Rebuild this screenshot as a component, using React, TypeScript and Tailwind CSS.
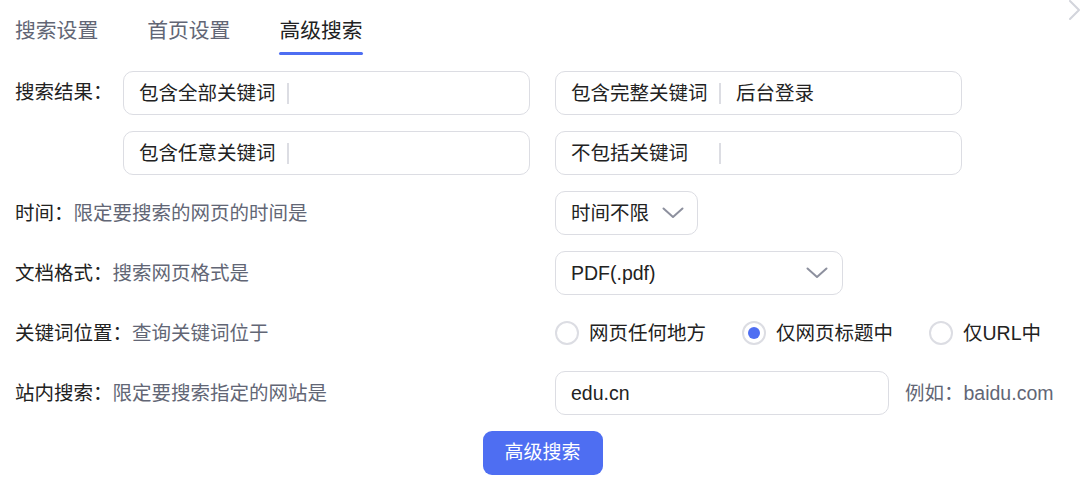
import { useState } from 'react';

const font = { fontFamily: '"Liberation Sans", "Noto Sans CJK SC", sans-serif' };

function KeywordInput({ label, value }: { label: string; value?: string }) {
  return (
    <div className="flex items-center h-[44px] w-[407px] border border-[#dcdde3] rounded-[10px] pl-[15px] bg-white">
      <span className="w-[137px] shrink-0 text-[#222222] leading-[22px]">{label}</span>
      <span className="ml-[11px] w-[2px] h-[21px] bg-[#dcdde3] shrink-0" />
      {value && <span className="ml-[15px] text-[#222222] leading-[22px]">{value}</span>}
    </div>
  );
}

function Chevron() {
  return (
    <svg width="22" height="12" viewBox="0 0 22 12" fill="none">
      <path d="M1.5 1.5 L11 10 L20.5 1.5" stroke="#8d909e" strokeWidth="2" strokeLinecap="round" strokeLinejoin="round" />
    </svg>
  );
}

function Row({ label, desc, children }: { label: string; desc: string; children: React.ReactNode }) {
  return (
    <div className="flex items-center h-[44px]">
      <div className="w-[540px] shrink-0 leading-[22px]">
        <span className="text-[#222222]">{label}：</span>
        <span className="text-[#626675]">{desc}</span>
      </div>
      {children}
    </div>
  );
}

export default function App() {
  const [pos, setPos] = useState(1);
  const radios = ['网页任何地方', '仅网页标题中', '仅URL中'];

  return (
    <div className="relative w-[1080px] h-[486px] bg-white overflow-hidden text-[19.5px]" style={font}>
      <svg className="absolute top-[-1px] right-[-2px]" width="14" height="24" viewBox="0 0 14 24" fill="none">
        <path d="M2 2 L11 11 L2 20" stroke="#d3d5dc" strokeWidth="2" strokeLinecap="round" strokeLinejoin="round" />
      </svg>

      <div className="pl-[15px]">
        {/* 标签页 */}
        <div className="flex gap-[49px] text-[20.8px]">
          {['搜索设置', '首页设置', '高级搜索'].map((t, i) => (
            <div key={t} className="flex flex-col pt-[20px]">
              <span className={'leading-[21px] ' + (i === 2 ? 'text-[#222222]' : 'text-[#626675]')}>{t}</span>
              <span className={'mt-[11px] h-[3px] rounded-full ' + (i === 2 ? 'bg-[#4e6ef2]' : 'bg-transparent')} />
            </div>
          ))}
        </div>

        <div className="mt-[16px] flex flex-col gap-[16px]">
          <div className="flex">
            <div className="w-[108px] h-[44px] flex items-center text-[#222222] shrink-0">搜索结果：</div>
            <div className="grid grid-cols-[407px_407px] gap-x-[25px] gap-y-[16px]">
              <KeywordInput label="包含全部关键词" />
              <KeywordInput label="包含完整关键词" value="后台登录" />
              <KeywordInput label="包含任意关键词" />
              <KeywordInput label="不包括关键词" />
            </div>
          </div>

          <Row label="时间" desc="限定要搜索的网页的时间是">
            <div className="flex items-center h-[44px] border border-[#dcdde3] rounded-[10px] pl-[15px] pr-[13px]">
              <span className="text-[#222222] leading-[22px]">时间不限</span>
              <span className="ml-[13px] flex"><Chevron /></span>
            </div>
          </Row>

          <Row label="文档格式" desc="搜索网页格式是">
            <div className="flex items-center justify-between w-[288px] h-[44px] border border-[#dcdde3] rounded-[10px] pl-[15px] pr-[14px]">
              <span className="text-[#222222] leading-[22px]">PDF(.pdf)</span>
              <Chevron />
            </div>
          </Row>

          <Row label="关键词位置" desc="查询关键词位于">
            <div className="flex items-center gap-[36px]">
              {radios.map((r, i) => (
                <label key={r} className="flex items-center gap-[10px] cursor-pointer" onClick={() => setPos(i)}>
                  <span className="w-[24px] h-[24px] rounded-full border-2 border-[#dcdde3] flex items-center justify-center">
                    {pos === i && <span className="w-[12px] h-[12px] rounded-full bg-[#4e6ef2]" />}
                  </span>
                  <span className="text-[#222222] leading-[22px]">{r}</span>
                </label>
              ))}
            </div>
          </Row>

          <Row label="站内搜索" desc="限定要搜索指定的网站是">
            <div className="flex items-center w-[334px] h-[44px] border border-[#dcdde3] rounded-[10px] pl-[15px]">
              <span className="text-[#222222] leading-[22px]">edu.cn</span>
            </div>
            <span className="ml-[16px] text-[#626675] leading-[22px]">例如：baidu.com</span>
          </Row>
        </div>
      </div>

      <div className="flex justify-center mt-[16px] pl-[5px]">
        <button className="w-[120px] h-[44px] rounded-[9px] bg-[#4e6ef2] text-white text-[19px] cursor-pointer">
          高级搜索
        </button>
      </div>
    </div>
  );
}
